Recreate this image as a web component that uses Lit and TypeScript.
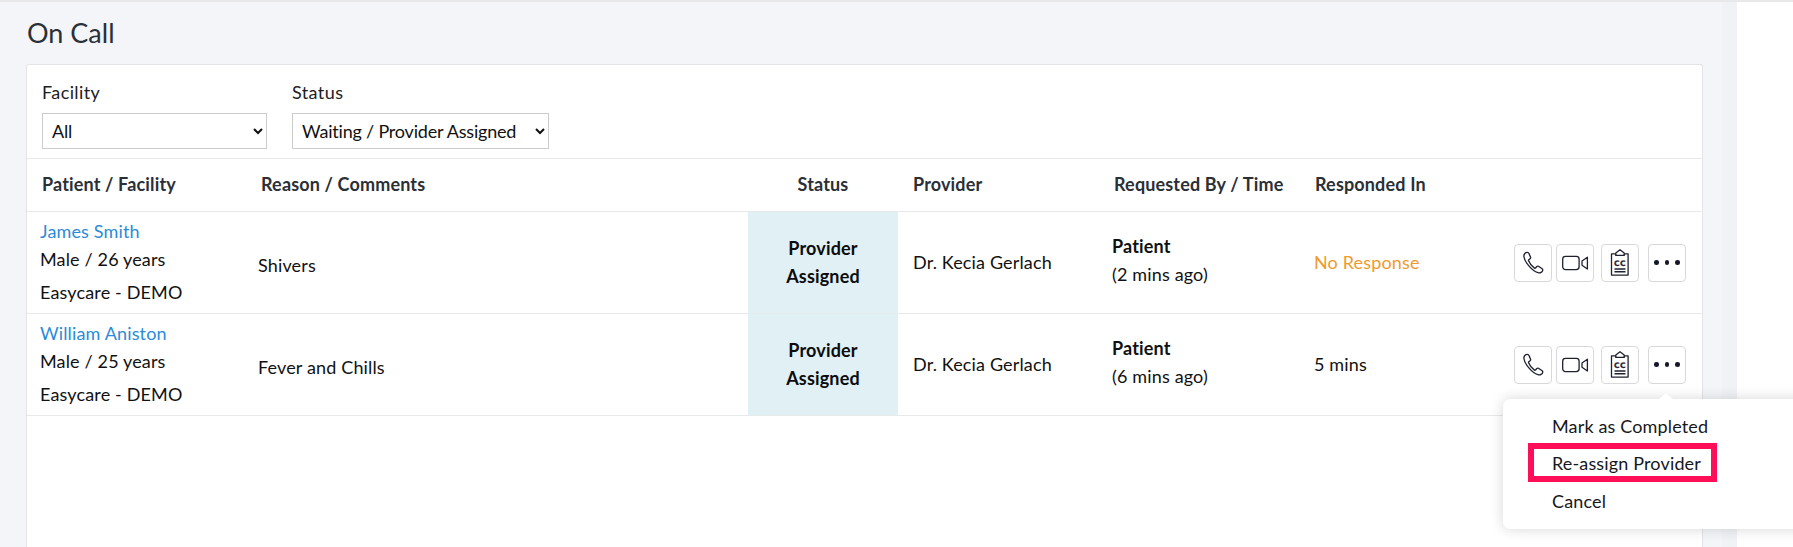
import { LitElement, html, css, svg } from "lit";
import { customElement } from "lit/decorators.js";

const phone = svg`<path transform="translate(-1.6 -1.300) scale(1.030)" d="M8.600 3.600c-1.700 0-3.600 1.400-3.200 4.200.8 5 7.400 13.600 13.600 15.500 2.400.7 4.200-.6 4.600-2.200.2-.8 0-1.200-.5-1.600l-3.600-2.400c-.6-.4-1.100-.3-1.600.2l-1.300 1.400c-.3.3-.6.3-1 .1-2.200-1.400-4.700-4.500-5.700-7-.2-.4-.1-.7.2-1l1.300-1c.5-.4.600-.9.400-1.500L10.300 4.700c-.3-.7-.9-1.100-1.700-1.100z"/>`;
const video = svg`<rect x="0.700" y="6.400" width="16.400" height="13.200" rx="2.800"/><path d="M25.400 7.200v11.800l-5.400-3.800v-4.200z" stroke-linejoin="round"/>`;
const clip = svg`
  <path d="M4.500 3.900h4.300V2.900L13 -.2l4.200 3.100v1h3.900v21.200H4.500z" stroke-linejoin="round"/>
  <path d="M8.800 3.900v1.500h8.400V3.900"/>
  <text x="12.900" y="15.700" class="cc">CC</text>
  <path d="M7.500 19h11M7.500 21.800h11" stroke-width="1.400"/>`;

const rows = [
  { name: "James Smith", info: "Male / 26 years", reason: "Shivers", ago: "(2 mins ago)", resp: "No Response", late: true },
  { name: "William Aniston", info: "Male / 25 years", reason: "Fever and Chills", ago: "(6 mins ago)", resp: "5 mins", late: false },
];

@customElement("app-root")
export class AppRoot extends LitElement {
  static styles = css`
    :host { display: block; width: 1793px; height: 547px; overflow: hidden; position: relative;
      font-family: Lato, sans-serif; font-size: 18px; letter-spacing: .15px; color: #111; background: #fff; }
    .shell { display: flex; height: 547px; border-top: 2px solid #e8e8ea; box-sizing: border-box; }
    .main { width: 1737px; flex: none; box-sizing: border-box; height: 545px; background: #f3f5f9;
      border-right: 15px solid #f1f2f5; padding: 0 19px 0 27px; overflow: hidden; }
    .title { margin: 0; height: 62px; box-sizing: border-box; padding-top: 15px; font-size: 27px; font-weight: 400;
      line-height: 32px; letter-spacing: 0; color: #2b3038; }
    .card { background: #fff; border: 1px solid #e2e4e8; border-bottom: 0; border-radius: 3px 3px 0 0; height: 490px; box-sizing: border-box; margin-left: -1px; }
    .filters { display: flex; gap: 25px; height: 94px; box-sizing: border-box; padding: 16px 0 0 15px; border-bottom: 1px solid #e8e9eb; }
    .filter label { display: block; height: 32px; line-height: 22px; color: #1d2024; letter-spacing: .4px; }
    select { display: block; height: 36px; box-sizing: border-box; font: 18px Lato, sans-serif; letter-spacing: -.2px; color: #111; background: #fff;
      border: 1px solid #ccc; border-radius: 0; padding: 0 5px; }
    .facility { width: 225px; }
    .status-select { width: 257px; }
    .grid { display: grid; grid-template-columns: 234px 487px 150px 200px 201px 201px 1fr; }
    .head { display: contents; font-weight: 700; color: #2b2f36; }
    .head > div { height: 53px; box-sizing: border-box; display: flex; align-items: center; border-bottom: 1px solid #e8e9eb; padding: 0 0 2px 15px; line-height: 20px; white-space: nowrap; }
    .head > .c2 { padding-left: 0; }
    .head > .st { justify-content: center; padding-left: 0; }
    .head > .late-col { padding-left: 16px; }
    .row { display: contents; }
    .cell { height: 102px; box-sizing: border-box; border-bottom: 1px solid #e8e9eb; display: flex; flex-direction: column; justify-content: center; white-space: nowrap; }
    .patient { padding: 0 0 0 13px; justify-content: flex-start; }
    .patient a { color: #2b8bd9; line-height: 20px; margin-top: 9px; height: 24px; }
    .patient .l1 { line-height: 24px; margin-top: 2px; }
    .patient .l2 { line-height: 24px; margin-top: 9px; }
    .reason { padding-top: 5px; padding-left: 0; margin-left: -3px; }
    .status { background: #e1f0f5; font-weight: 700; text-align: center; line-height: 28px; padding-bottom: 2px; color: #0c0c0c; }
    .provider { padding: 0 0 2px 15px; }
    .by { padding: 0 0 5px 14px; line-height: 28px; }
    .by b { font-weight: 700; }
    .resp { padding: 0 0 2px 15px; }
    .late { color: #f09a2c; }
    .actions { flex-direction: row; align-items: center; justify-content: flex-start; padding: 0 0 0 14px; }
    .btn { width: 38px; height: 38px; flex: none; box-sizing: border-box; border: 1px solid #d9d9dc; border-radius: 4px; background: #fff;
      display: flex; align-items: center; justify-content: center; margin-right: 4px; }
    .btn.third { margin: 0 9px 0 3px; }
    .btn svg { width: 26px; height: 26px; fill: none; stroke: #1f2130; stroke-width: 1.300; overflow: visible; }
    .cc { font: 700 7.500px "DejaVu Sans", sans-serif; letter-spacing: .3px; text-anchor: middle; fill: #1f2130; stroke: #1f2130; stroke-width: .25px; }
    .dots { display: flex; gap: 6px; }
    .dots i { width: 4.500px; height: 4.500px; border-radius: 50%; background: #16172a; }
    .side { flex: 1; background: #fff; }
    .menu { position: absolute; left: 1503px; top: 399px; width: 320px; height: 130px; box-sizing: border-box; background: #fff;
      border-radius: 7px; box-shadow: 0 0 14px rgba(0,0,0,.16); padding: 15px 0 0 49px; color: #16181d; }
    .menu::before { content: ""; position: absolute; left: 156px; top: -6px; border: 7px solid transparent; border-top: 0; border-bottom: 6px solid #fff; }
    .menu div { height: 37.500px; line-height: 24px; }
    .menu .mid { line-height: 22px; }
    .mark { position: absolute; left: 25px; top: 44px; width: 189px; height: 39px; box-sizing: border-box; border: 6px solid #ff0f57; }
  `;

  render() {
    return html`
      <div class="shell">
        <div class="main">
          <h1 class="title">On Call</h1>
          <div class="card">
            <div class="filters">
              <div class="filter"><label>Facility</label><select class="facility"><option>All</option></select></div>
              <div class="filter"><label>Status</label><select class="status-select"><option>Waiting / Provider Assigned</option></select></div>
            </div>
            <div class="grid">
              <div class="head">
                <div>Patient / Facility</div><div class="c2">Reason / Comments</div><div class="st">Status</div>
                <div>Provider</div><div class="late-col">Requested By / Time</div><div class="late-col">Responded In</div><div></div>
              </div>
              ${rows.map(r => html`
                <div class="row">
                  <div class="cell patient"><a>${r.name}</a><span class="l1">${r.info}</span><span class="l2">Easycare - DEMO</span></div>
                  <div class="cell reason">${r.reason}</div>
                  <div class="cell status">Provider<br />Assigned</div>
                  <div class="cell provider">Dr. Kecia Gerlach</div>
                  <div class="cell by"><b>Patient</b><span>${r.ago}</span></div>
                  <div class="cell resp ${r.late ? "late" : ""}">${r.resp}</div>
                  <div class="cell actions">
                    <div class="btn"><svg viewBox="0 0 26 26">${phone}</svg></div>
                    <div class="btn"><svg viewBox="0 0 26 26">${video}</svg></div>
                    <div class="btn third"><svg viewBox="0 0 26 26">${clip}</svg></div>
                    <div class="btn"><span class="dots"><i></i><i></i><i></i></span></div>
                  </div>
                </div>`)}
            </div>
          </div>
        </div>
        <div class="side"></div>
      </div>
      <div class="menu">
        <div>Mark as Completed</div><div class="mid">Re-assign Provider</div><div>Cancel</div>
        <span class="mark"></span>
      </div>
    `;
  }
}
